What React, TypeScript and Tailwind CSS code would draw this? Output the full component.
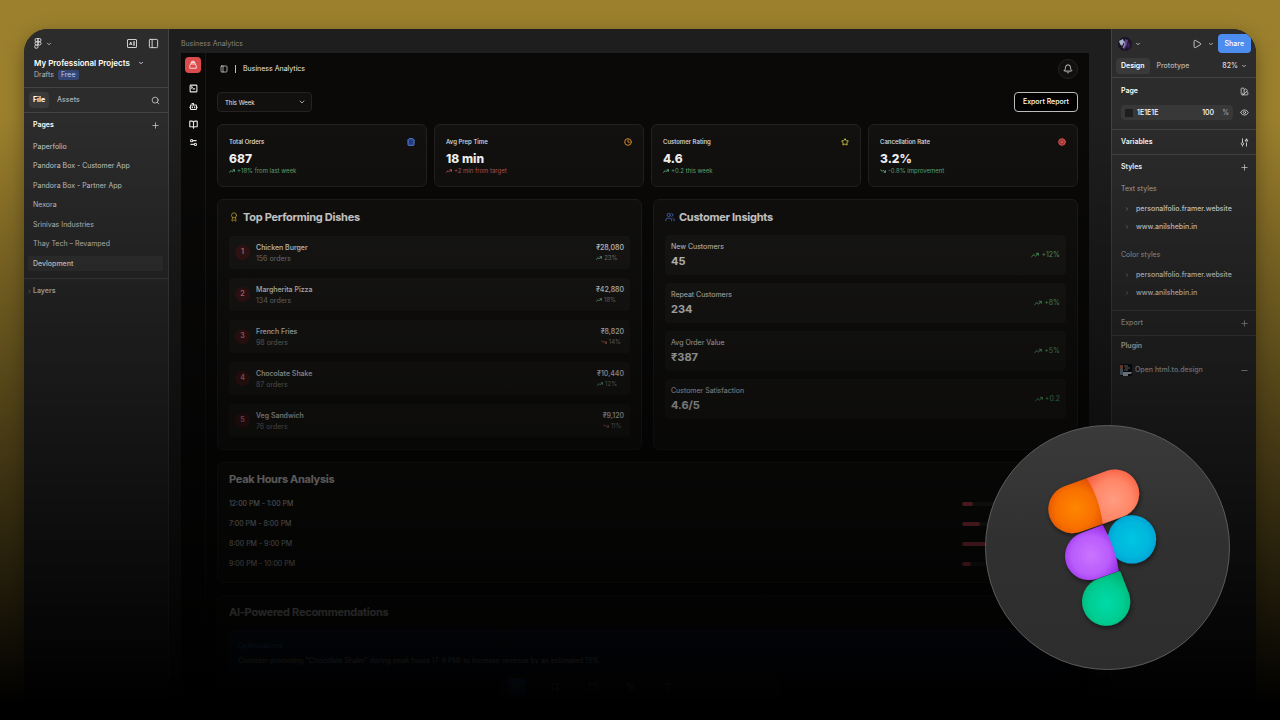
import type { ReactNode } from 'react';
import {
  Award,
  Bell,
  BookOpen,
  Bot,
  ChevronDown,
  ChevronRight,
  CircleX,
  Clock,
  Eye,
  Frame,
  Minus,
  MousePointer2,
  PanelLeft,
  PenTool,
  Play,
  Plus,
  Search,
  Settings2,
  ShoppingBag,
  Square,
  SquareTerminal,
  Star,
  SwatchBook,
  TrendingDown,
  TrendingUp,
  Type,
  Users,
} from 'lucide-react';

const pages = [
  'Paperfolio',
  'Pandora Box - Customer App',
  'Pandora Box - Partner App',
  'Nexora',
  'Srinivas Industries',
  'Thay Tech – Revamped',
  'Devlopment',
];

const stats = [
  { label: 'Total Orders', value: '687', note: '+18% from last week', icon: ShoppingBag, iconClass: 'text-[#5b84e8] fill-[#253f80]', noteClass: 'text-[#5fae7c]', up: true },
  { label: 'Avg Prep Time', value: '18 min', note: '+2 min from target', icon: Clock, iconClass: 'text-[#d98a35]', noteClass: 'text-[#b85a58]', up: true },
  { label: 'Customer Rating', value: '4.6', note: '+0.2 this week', icon: Star, iconClass: 'text-[#d3cd48]', noteClass: 'text-[#5fae7c]', up: true },
  { label: 'Cancellation Rate', value: '3.2%', note: '-0.8% improvement', icon: CircleX, iconClass: 'text-[#e0524f] fill-[#a03a3a]', noteClass: 'text-[#5fae7c]', up: false },
];

const dishes = [
  { name: 'Chicken Burger', orders: 156, revenue: '₹28,080', change: '23%', up: true },
  { name: 'Margherita Pizza', orders: 134, revenue: '₹42,880', change: '18%', up: true },
  { name: 'French Fries', orders: 98, revenue: '₹8,820', change: '14%', up: false },
  { name: 'Chocolate Shake', orders: 87, revenue: '₹10,440', change: '12%', up: true },
  { name: 'Veg Sandwich', orders: 76, revenue: '₹9,120', change: '11%', up: false },
];

const insights = [
  { label: 'New Customers', value: '45', change: '+12%' },
  { label: 'Repeat Customers', value: '234', change: '+8%' },
  { label: 'Avg Order Value', value: '₹387', change: '+5%' },
  { label: 'Customer Satisfaction', value: '4.6/5', change: '+0.2' },
];

const peakHours = [
  { time: '12:00 PM - 1:00 PM', load: 11 },
  { time: '7:00 PM - 8:00 PM', load: 17 },
  { time: '8:00 PM - 9:00 PM', load: 26 },
  { time: '9:00 PM - 10:00 PM', load: 9 },
];

const styleLinks = ['personalfolio.framer.website', 'www.anilshebin.in'];

const tools = [
  { label: 'Move', icon: MousePointer2 },
  { label: 'Frame', icon: Frame },
  { label: 'Rectangle', icon: Square },
  { label: 'Pen', icon: PenTool },
  { label: 'Text', icon: Type },
];

function FigmaMark() {
  return (
    <svg viewBox="0 0 16 24" className="h-[11px] w-2" fill="none" stroke="currentColor" strokeWidth="2">
      <path d="M8 1H5a3.6 3.6 0 0 0 0 7.2h3zM8 1h3a3.6 3.6 0 0 1 0 7.2H8zM8 8.2H5a3.6 3.6 0 0 0 0 7.2h3z" />
      <circle cx="11.2" cy="11.8" r="3.5" />
      <path d="M8 15.4H5A3.6 3.6 0 1 0 8 19z" />
    </svg>
  );
}

function AiIcon() {
  return (
    <svg viewBox="0 0 20 18" className="h-[9px] w-[10px]" fill="none" stroke="currentColor" strokeWidth="1.8">
      <rect x="1" y="1" width="18" height="16" rx="1" />
      <path d="M5 12l2.5-6L10 12M6 10h3M12 6h4M14 6v3M12 12h4M14 8v4" />
    </svg>
  );
}

function VariablesIcon() {
  return (
    <svg viewBox="0 0 18 18" className="size-[9px]" fill="none" stroke="currentColor" strokeWidth="1.8">
      <path d="M5 1v8M5 14v3M13 17V9M13 4V1" />
      <circle cx="5" cy="11.5" r="2.4" />
      <path d="M10 6l3-4 3 4z" />
    </svg>
  );
}

function PotIcon() {
  return (
    <svg viewBox="0 0 20 20" className="size-[10px]" fill="none" stroke="#ffe1dd" strokeWidth="1.8" strokeLinejoin="round">
      <path d="M5.5 8h9l2 3v5.5h-13V11zM6 8V5h8v3M7.5 5V2.5h5V5" />
    </svg>
  );
}

function Avatar() {
  return (
    <svg viewBox="0 0 14 14" className="size-[14px]">
      <circle cx="7" cy="7" r="7" fill="#1a1425" />
      <path d="M1 4l4-2 1 3-2 4-2-2z" fill="#a9b5cf" />
      <path d="M7 2l3 1-1 5-3 5-1-4 2-3z" fill="#5a3b86" />
      <path d="M10 5l3 3-3 4-1-2z" fill="#33214e" />
      <path d="M6 4l1 3-2 4" stroke="#c8b8dc" strokeWidth=".8" fill="none" />
    </svg>
  );
}

function PluginThumb() {
  return (
    <svg viewBox="0 0 12 12" className="size-3">
      <rect width="12" height="12" rx="1" fill="#0c0d10" />
      <path d="M0 1h3v4H0z" fill="#a65a3d" />
      <path d="M0 5h3v6H0z" fill="#6d8196" />
      <path d="M4 2h4M5 4h5M4 6h4" stroke="#d5d8dc" strokeWidth=".7" />
      <path d="M3 8h9l-1 2H8v2H3z" fill="#b9c4cf" />
    </svg>
  );
}

function FigmaBadge() {
  return (
    <div className="absolute right-[50px] bottom-[50px] z-20 size-[245px] overflow-hidden rounded-full border border-[#5c5c5c] bg-linear-to-b from-[#3a3a3a] via-[#303030] to-[#2d2d2d]">
      <svg viewBox="48 48 729 729" className="size-full" role="img" aria-label="Figma">
        <defs>
          <radialGradient id="orange" cx=".5" cy=".55" r=".6">
            <stop offset="0" stopColor="#ff8606" />
            <stop offset=".6" stopColor="#f87000" />
            <stop offset="1" stopColor="#dc4c00" />
          </radialGradient>
          <radialGradient id="coral" cx=".5" cy=".55" r=".6">
            <stop offset="0" stopColor="#ff9c80" />
            <stop offset=".6" stopColor="#ff8768" />
            <stop offset="1" stopColor="#f75f42" />
          </radialGradient>
          <radialGradient id="violet" cx=".48" cy=".55" r=".6">
            <stop offset="0" stopColor="#cb74ff" />
            <stop offset=".6" stopColor="#b95bfb" />
            <stop offset="1" stopColor="#9426e6" />
          </radialGradient>
          <radialGradient id="cyan" cx=".5" cy=".5" r=".52">
            <stop offset="0" stopColor="#06c5e2" />
            <stop offset=".7" stopColor="#00b6dc" />
            <stop offset="1" stopColor="#00a2d4" />
          </radialGradient>
          <radialGradient id="green" cx=".5" cy=".58" r=".6">
            <stop offset="0" stopColor="#06dba8" />
            <stop offset=".6" stopColor="#05cc92" />
            <stop offset="1" stopColor="#04b070" />
          </radialGradient>
          <filter id="soft" x="-20%" y="-20%" width="140%" height="140%">
            <feDropShadow dx="3" dy="7" stdDeviation="8" floodColor="#000" floodOpacity=".5" />
          </filter>
        </defs>
        <g filter="url(#soft)">
          <path d="M385 506L446 484Q450 483 452 487L477 551A72.5 72.5 0 1 1 385 506Z" fill="url(#green)" />
          <circle cx="486" cy="388" r="72.5" fill="url(#cyan)" />
          <path d="M398 345Q438 415 446 483L381 506A72 72 0 0 1 333 370Z" fill="url(#violet)" />
          <path d="M350 205L411 182.5A72 72 0 0 1 459 319.5L398 342Z" fill="url(#coral)" />
          <path d="M350 205Q388 262 398 342L331.5 365.5A72 72 0 0 1 283.5 228.5Z" fill="url(#orange)" />
        </g>
      </svg>
    </div>
  );
}

function LayersPanel() {
  return (
    <aside className="flex w-[145px] shrink-0 flex-col border-r border-[#434343] bg-[#2c2c2c] text-[7px] leading-[10px] text-[#d2d2d2]">
      <div className="flex h-[59px] flex-col border-b border-[#434343] pt-[9px] pr-[9px] pl-[10px]">
        <div className="flex h-[11px] items-center text-[#e0e0e0]">
          <button className="flex items-center gap-1" aria-label="Main menu">
            <FigmaMark />
            <ChevronDown strokeWidth={3} className="size-[6px]" />
          </button>
          <button className="ml-auto" aria-label="Actions"><AiIcon /></button>
          <button className="ml-[11px]" aria-label="Toggle panels"><PanelLeft className="size-[11px]" /></button>
        </div>
        <button className="mt-[9px] flex items-center gap-2 text-[8px] font-semibold text-white">
          My Professional Projects
          <ChevronDown strokeWidth={3} className="size-[6px]" />
        </button>
        <div className="mt-[2px] flex items-center gap-1 text-[#b9b9b9]">
          Drafts
          <span className="rounded-xs bg-[#344673] px-[3px] text-[#b8cdfd]">Free</span>
        </div>
      </div>

      <div className="flex h-[25px] items-center border-b border-[#434343] pr-2 pl-[5px]">
        <button className="h-4 rounded-sm bg-[#3a3a3a] px-1 font-bold text-white">File</button>
        <button className="ml-2 font-medium text-[#b5b5b5]">Assets</button>
        <button className="ml-auto text-[#d8d8d8]" aria-label="Search"><Search className="size-[9px]" /></button>
      </div>

      <div className="border-b border-[#434343] pt-[7px] pb-[7px]">
        <div className="flex items-center justify-between pr-2 pl-[9px]">
          <h2 className="font-semibold text-white">Pages</h2>
          <button aria-label="Add page"><Plus className="size-[9px]" /></button>
        </div>
        <ul className="mt-[9px] flex h-[132px] flex-col justify-between pr-[5px] pl-1">
          {pages.map((page) => (
            <li key={page}>
              <button
                className={`block h-[15px] w-full rounded-xs px-[5px] text-left ${page === 'Devlopment' ? 'bg-[#363636] font-medium text-[#eeeeee]' : ''}`}
              >
                {page}
              </button>
            </li>
          ))}
        </ul>
      </div>

      <button className="flex h-6 items-center gap-px pl-[3px] font-semibold">
        <ChevronRight strokeWidth={3} className="size-[5px] text-[#999999]" />
        Layers
      </button>
    </aside>
  );
}

function StyleGroup({ title }: { title: string }) {
  return (
    <div>
      <h3 className="text-[#adadad]">{title}</h3>
      <ul className="mt-[10px] flex flex-col gap-2">
        {styleLinks.map((link) => (
          <li key={link} className="flex items-center gap-[6px] pl-[3px]">
            <ChevronRight className="size-[6px] text-[#a0a0a0]" />
            <a href="#" className="font-medium">{link}</a>
          </li>
        ))}
      </ul>
    </div>
  );
}

function DesignPanel() {
  return (
    <aside className="flex w-[145px] shrink-0 flex-col border-l border-[#434343] bg-[#2c2c2c] text-[7px] leading-[10px] text-[#dedede]">
      <div className="h-[49px] border-b border-[#434343] pt-[5px]">
        <div className="flex h-[19px] items-center pr-[5px] pl-[6px]">
          <button className="flex items-center gap-[3px]" aria-label="Profile">
            <Avatar />
            <ChevronDown strokeWidth={3} className="size-[6px]" />
          </button>
          <button className="ml-auto" aria-label="Present"><Play className="size-[10px]" /></button>
          <button className="ml-[6px]" aria-label="Present options"><ChevronDown strokeWidth={3} className="size-[6px]" /></button>
          <button className="ml-1 h-[19px] rounded-sm bg-[#4d8df0] px-[7px] font-medium text-white">Share</button>
        </div>
        <div className="mt-[5px] flex items-center pr-[9px] pl-1">
          <button className="h-4 rounded-sm bg-[#3a3a3a] px-[5px] font-semibold text-white">Design</button>
          <button className="ml-[7px] font-medium text-[#b5b5b5]">Prototype</button>
          <button className="ml-auto flex items-center gap-[3px] font-medium">
            82%
            <ChevronDown strokeWidth={3} className="size-[6px]" />
          </button>
        </div>
      </div>

      <div className="h-[52px] border-b border-[#434343] pt-2 pr-[7px] pl-[9px]">
        <div className="flex items-center justify-between">
          <h2 className="font-semibold text-white">Page</h2>
          <button aria-label="Page styles"><SwatchBook className="size-[9px]" /></button>
        </div>
        <div className="mt-[9px] flex items-center justify-between">
          <div className="flex h-[15px] w-[112px] items-center rounded-sm bg-[#383838] pr-1 pl-1">
            <span className="size-2 bg-[#1e1e1e]" />
            <input aria-label="Page colour" defaultValue="1E1E1E" className="ml-1 w-[50px] font-medium text-white" />
            <input aria-label="Opacity" defaultValue="100" className="ml-auto w-4 font-medium text-white" />
            <span className="ml-1 text-[#a8a8a8]">%</span>
          </div>
          <button aria-label="Toggle visibility"><Eye className="size-[9px]" /></button>
        </div>
      </div>

      <div className="flex h-[25px] items-center justify-between border-b border-[#434343] pr-[7px] pl-[9px]">
        <h2 className="font-semibold text-white">Variables</h2>
        <button aria-label="Open variables"><VariablesIcon /></button>
      </div>

      <div className="h-[156px] border-b border-[#434343] pt-[7px] pr-[7px] pl-[9px]">
        <div className="flex items-center justify-between">
          <h2 className="font-semibold text-white">Styles</h2>
          <button aria-label="Add style"><Plus className="size-[9px]" /></button>
        </div>
        <div className="mt-3 flex flex-col gap-[18px]">
          <StyleGroup title="Text styles" />
          <StyleGroup title="Color styles" />
        </div>
      </div>

      <div className="flex h-[25px] items-center justify-between border-b border-[#434343] pr-[7px] pl-[9px] text-[#b5b5b5]">
        <h2 className="font-medium">Export</h2>
        <button aria-label="Add export"><Plus className="size-[9px]" /></button>
      </div>

      <div className="pt-[5px] pr-[7px] pl-2">
        <h2 className="pl-px font-semibold">Plugin</h2>
        <div className="mt-[13px] flex items-center gap-[3px]">
          <PluginThumb />
          <button className="font-medium text-[#c0c0c0]">Open html.to.design</button>
          <button className="ml-auto" aria-label="Remove plugin"><Minus className="size-[9px]" /></button>
        </div>
      </div>
    </aside>
  );
}

function Panel({ children }: { children: ReactNode }) {
  return <section className="rounded-md border border-[#1f1e1c] bg-[#12110f] px-[11px]">{children}</section>;
}

function Trend({ up, className }: { up: boolean; className: string }) {
  const Icon = up ? TrendingUp : TrendingDown;
  return <Icon strokeWidth={4} className={className} />;
}

function Dashboard() {
  return (
    <div className="flex min-h-0 grow overflow-hidden bg-[#0a0908] text-[#e8e8e8]">
      <nav className="flex w-[25px] shrink-0 flex-col items-center border-r border-[#191817] pt-1 text-[#e8e8e8]">
        <button className="flex size-4 items-center justify-center rounded-sm bg-[#dc4b4b]" aria-label="Home"><PotIcon /></button>
        <div className="mt-[11px] flex flex-col gap-[9px]">
          {[SquareTerminal, Bot, BookOpen, Settings2].map((Icon, i) => (
            <button key={i} aria-label={['Orders', 'Assistant', 'Menu', 'Settings'][i]}>
              <Icon strokeWidth={3} className="block size-[9px]" />
            </button>
          ))}
        </div>
      </nav>

      <main className="flex min-w-0 grow flex-col pr-[11px] pl-[11px]">
        <header className="flex h-8 shrink-0 items-center text-[7px] leading-[10px]">
          <button className="ml-[3px]" aria-label="Toggle sidebar"><PanelLeft className="size-2" /></button>
          <span className="mx-[7px] h-2 w-px bg-[#bbbbbb]" />
          <h1>Business Analytics</h1>
          <button className="ml-auto flex size-5 items-center justify-center rounded-full border border-[#242322] bg-[#11100f]" aria-label="Notifications">
            <Bell className="size-[10px]" />
          </button>
        </header>

        <div className="mt-[7px] flex items-center justify-between text-[7px]">
          <div className="relative">
            <select aria-label="Period" className="h-5 w-[95px] appearance-none rounded-sm border border-[#242322] bg-[#11100f] pl-[7px] text-[6px]">
              <option>This Week</option>
            </select>
            <ChevronDown className="pointer-events-none absolute top-[6px] right-[6px] size-2" />
          </div>
          <button className="h-5 rounded-sm border border-[#bdbdbd] bg-black px-2 font-medium text-white">Export Report</button>
        </div>

        <div className="mt-3 grid grid-cols-4 gap-[7px]">
          {stats.map(({ label, value, note, icon: Icon, iconClass, noteClass, up }) => (
            <section key={label} className="h-[63px] rounded-md border border-[#232220] bg-[#12110f] px-[11px] pt-3">
              <div className="flex items-center justify-between">
                <h2 className="text-[6px] leading-[10px] font-medium">{label}</h2>
                <Icon strokeWidth={3} className={`size-2 ${iconClass}`} />
              </div>
              <p className="mt-[5px] text-xs leading-[14px] font-extrabold text-white">{value}</p>
              <p className={`mt-px flex items-center gap-[2px] text-[6px] leading-2 ${noteClass}`}>
                <Trend up={up} className="size-[6px]" />
                {note}
              </p>
            </section>
          ))}
        </div>

        <div className="mt-3 grid grid-cols-2 gap-[11px]">
          <Panel>
            <h2 className="flex items-center gap-1 pt-[9px] text-[11px] leading-4 font-bold tracking-tight">
              <Award className="size-[10px] text-[#cfb02d]" />
              Top Performing Dishes
            </h2>
            <ol className="mt-[11px] mb-3 flex flex-col gap-[9px]">
              {dishes.map((dish, i) => (
                <li key={dish.name} className="flex h-[33px] items-center rounded-sm bg-[#1a1917] px-[6px]">
                  <span className="flex size-[15px] items-center justify-center rounded-full bg-[#3b1718] text-[7px] font-semibold text-[#e8808a]">{i + 1}</span>
                  <div className="ml-[6px] grow">
                    <h3 className="text-[7px] leading-[11px] font-medium">{dish.name}</h3>
                    <p className="text-[7px] leading-[11px] text-[#888888]">{dish.orders} orders</p>
                  </div>
                  <div>
                    <p className="text-[7px] leading-[11px] font-medium">{dish.revenue}</p>
                    <p className="flex items-center gap-[2px] text-[6px] leading-[10px] text-[#888888]">
                      <Trend up={dish.up} className={`size-[6px] ${dish.up ? 'text-[#67b58c]' : 'text-[#b06a62]'}`} />
                      {dish.change}
                    </p>
                  </div>
                </li>
              ))}
            </ol>
          </Panel>

          <Panel>
            <h2 className="flex items-center gap-1 pt-[9px] text-[11px] leading-4 font-bold tracking-tight">
              <Users className="size-[10px] text-[#5279dc]" />
              Customer Insights
            </h2>
            <ul className="mt-[10px] flex flex-col gap-2">
              {insights.map((item) => (
                <li key={item.label} className="flex h-10 items-center justify-between rounded-sm bg-[#1a1917] px-[6px]">
                  <div>
                    <h3 className="text-[7px] leading-3">{item.label}</h3>
                    <p className="text-[11px] leading-4 font-bold">{item.value}</p>
                  </div>
                  <p className="flex items-center gap-[2px] text-[7px] text-[#5fae6c]">
                    <TrendingUp strokeWidth={3} className="size-2" />
                    {item.change}
                  </p>
                </li>
              ))}
            </ul>
          </Panel>
        </div>

        <div className="mt-3">
          <Panel>
            <h2 className="pt-2 text-[11px] leading-4 font-bold tracking-tight">Peak Hours Analysis</h2>
            <ul className="mt-[7px] mb-2">
              {peakHours.map((slot) => (
                <li key={slot.time} className="flex h-5 items-center justify-between text-[7px]">
                  {slot.time}
                  <span className="h-1 w-[104px] overflow-hidden rounded-full bg-[#292724]">
                    <span className="block h-full rounded-full bg-[#d04a57]" style={{ width: `${slot.load}%` }} />
                  </span>
                </li>
              ))}
            </ul>
          </Panel>
        </div>

        <div className="mt-3">
          <Panel>
            <h2 className="pt-2 text-[11px] leading-4 font-bold tracking-tight">AI-Powered Recommendations</h2>
            <div className="mt-[10px] mb-3 rounded-sm border border-[#182640] bg-[#0e1a33] px-2 py-[7px] text-[7px] leading-[15px]">
              <h3 className="text-[#5b84e8]">Optimizations</h3>
              <p>Consider promoting "Chocolate Shake" during peak hours (7-9 PM) to increase revenue by an estimated 15%.</p>
            </div>
          </Panel>
        </div>
      </main>
    </div>
  );
}

function Toolbar() {
  return (
    <div className="absolute bottom-5 left-1/2 flex h-[26px] w-[280px] -translate-x-1/2 items-center gap-5 rounded-md bg-[#2c2c2c] px-2 text-[#e8e8e8]">
      {tools.map(({ label, icon: Icon }, i) => (
        <button key={label} aria-label={label} className={`flex size-[18px] items-center justify-center rounded-sm ${i === 0 ? 'bg-[#2f7df0]' : ''}`}>
          <Icon className="size-[10px]" />
        </button>
      ))}
    </div>
  );
}

export default function App() {
  return (
    <div className="relative flex h-screen flex-col overflow-hidden bg-[#9c802d] px-6 pt-[29px] font-['Inter',sans-serif]">
      <div className="flex min-h-0 grow overflow-hidden rounded-t-[24px] bg-[#1e1e1e] shadow-[0_6px_20px_rgba(0,0,0,0.35)]">
        <LayersPanel />
        <div className="flex min-w-0 grow flex-col pr-[22px] pl-3">
          <p className="pt-[10px] pb-1 text-[7px] leading-[10px] text-[#858585]">Business Analytics</p>
          <Dashboard />
        </div>
        <DesignPanel />
      </div>
      <Toolbar />

      {/* Fade to black */}
      <div className="pointer-events-none absolute inset-0 z-10 bg-linear-to-b from-transparent from-16% to-black to-98%" />
      <FigmaBadge />
    </div>
  );
}
